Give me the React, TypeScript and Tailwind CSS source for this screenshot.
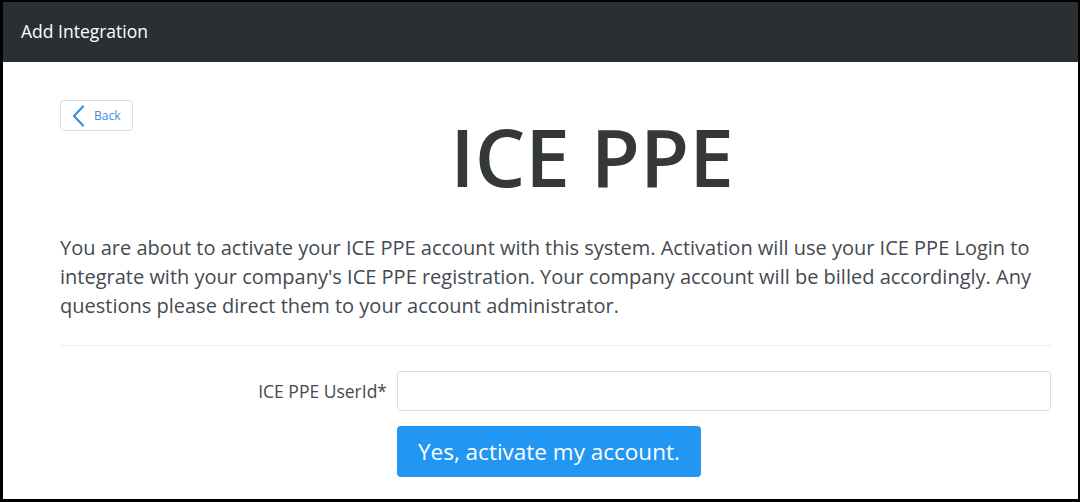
export default function App() {
    return (
        <div
            className="w-[1080px] h-[502px] bg-white border-t-2 border-l-[3px] border-r-2 border-b-[3px] border-black overflow-hidden"
            style={{ fontFamily: '"Open Sans", "Liberation Sans", sans-serif' }}
        >
            <div className="h-[60px] bg-[#2b2e33] flex items-center px-[18px]">
                <h1 className="text-white text-[17.5px] -mt-[1px]">Add Integration</h1>
            </div>

            <div className="pl-[57px] pr-[27px] pt-[38px]">
                <div className="flex items-start">
                    <button className="flex items-center gap-[9px] h-[31px] w-[73px] pl-[10px] border border-[#d8dde6] rounded-[4px] text-[12px] text-[#3c8fe0] bg-white">
                        <svg width="14" height="22" viewBox="0 0 14 22" fill="none">
                            <polyline points="12,1.5 3,11 12,20.5" stroke="#3c8fe0" strokeWidth="2.2" strokeLinecap="round" strokeLinejoin="round" />
                        </svg>
                        Back
                    </button>
                    <div className="flex-1 flex justify-center">
                        <h2 className="text-[80px] leading-none font-semibold text-[#35383b] mt-[16px]">ICE PPE</h2>
                    </div>
                </div>

                <p className="mt-[37px] text-[20px] leading-[29px] text-[#444a50]">
                    You are about to activate your ICE PPE account with this system. Activation will use your ICE PPE Login to integrate with your company's ICE PPE registration. Your company account will be billed accordingly. Any questions please direct them to your account administrator.
                </p>

                <hr className="mt-[25px] border-[#eceef0]" />

                <div className="flex items-center mt-[25px]">
                    <label className="w-[337px] pr-[10px] text-right text-[17.5px] text-[#444a50]">ICE PPE UserId*</label>
                    <input className="flex-1 h-[40px] border border-[#d8dde6] rounded-[4px] px-3 outline-none" />
                </div>

                <div className="flex mt-[15px]">
                    <div className="w-[337px]" />
                    <button className="h-[51px] px-[21px] bg-[#2196f3] rounded-[4px] text-white text-[22.5px]">
                        Yes, activate my account.
                    </button>
                </div>
            </div>
        </div>
    );
}
